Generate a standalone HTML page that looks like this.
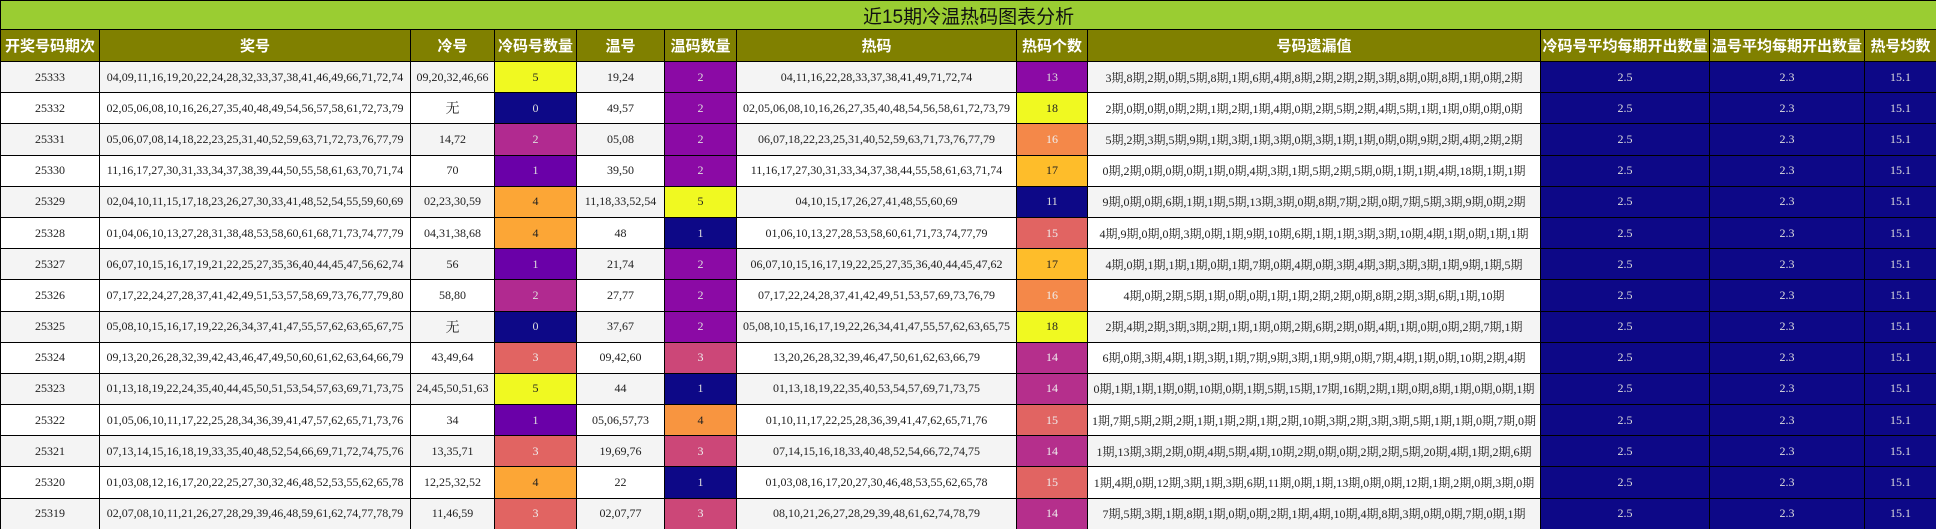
<!DOCTYPE html>
<html><head><meta charset="utf-8">
<style>
html,body{margin:0;padding:0;width:1936px;height:529px;overflow:hidden;background:#fff}
table{border-collapse:collapse;table-layout:fixed;width:1936px}
td,th{border:1.5px solid #000;text-align:center;padding:0;overflow:hidden;white-space:nowrap}
thead tr.t td{background:#9acd32;height:28px;font:19px "Liberation Sans","Noto Sans CJK SC",sans-serif;color:#111}
th{background:#808000;color:#fff;height:31px;font:bold 15px "Liberation Sans","Noto Sans CJK SC",sans-serif}
tbody td{height:30.2px;font:12px "Liberation Serif","Noto Serif CJK SC",serif;color:#222}
tbody tr:nth-child(odd) td{background:#f4f4f4}
tbody tr:nth-child(even) td{background:#fff}
tbody td.a{background:#0d0887!important;color:#ddd}
td.c0{background:#0d0887!important;color:#ddd}
td.c1{background:#6a00a8!important;color:#ddd}
td.c2{background:#b12a90!important;color:#ddd}
td.p2{background:#8b0aa5!important;color:#ddd}
td.c3{background:#e16462!important;color:#eee}
td.k3{background:#cc4778!important;color:#eee}
td.c4{background:#fca636!important;color:#222}
td.w4{background:#f89540!important;color:#222}
td.c5{background:#f0f921!important;color:#222}
td.h11{background:#0d0887!important;color:#ddd}
td.h13{background:#8b0aa5!important;color:#ddd}
td.h14{background:#b52f8c!important;color:#eee}
td.h15{background:#e16462!important;color:#eee}
td.h16{background:#f48849!important;color:#eee}
td.h17{background:#febd2a!important;color:#222}
td.h18{background:#f0f921!important;color:#222}
</style></head><body>
<table>
<colgroup><col style="width:99px"><col style="width:311px"><col style="width:84px"><col style="width:82px"><col style="width:88px"><col style="width:72px"><col style="width:280px"><col style="width:71px"><col style="width:453px"><col style="width:169px"><col style="width:155px"><col style="width:72px"></colgroup>
<thead>
<tr class="t"><td colspan="12">近15期冷温热码图表分析</td></tr>
<tr><th>开奖号码期次</th><th>奖号</th><th>冷号</th><th>冷码号数量</th><th>温号</th><th>温码数量</th><th>热码</th><th>热码个数</th><th>号码遗漏值</th><th>冷码号平均每期开出数量</th><th>温号平均每期开出数量</th><th>热号均数</th></tr>
</thead>
<tbody>
<tr><td>25333</td><td>04,09,11,16,19,20,22,24,28,32,33,37,38,41,46,49,66,71,72,74</td><td>09,20,32,46,66</td><td class="c5">5</td><td>19,24</td><td class="p2">2</td><td>04,11,16,22,28,33,37,38,41,49,71,72,74</td><td class="h13">13</td><td>3期,8期,2期,0期,5期,8期,1期,6期,4期,8期,2期,2期,2期,3期,8期,0期,8期,1期,0期,2期</td><td class="a">2.5</td><td class="a">2.3</td><td class="a">15.1</td></tr>
<tr><td>25332</td><td>02,05,06,08,10,16,26,27,35,40,48,49,54,56,57,58,61,72,73,79</td><td style="font-size:14px">无</td><td class="c0">0</td><td>49,57</td><td class="p2">2</td><td>02,05,06,08,10,16,26,27,35,40,48,54,56,58,61,72,73,79</td><td class="h18">18</td><td>2期,0期,0期,0期,2期,1期,2期,1期,4期,0期,2期,5期,2期,4期,5期,1期,1期,0期,0期,0期</td><td class="a">2.5</td><td class="a">2.3</td><td class="a">15.1</td></tr>
<tr><td>25331</td><td>05,06,07,08,14,18,22,23,25,31,40,52,59,63,71,72,73,76,77,79</td><td>14,72</td><td class="c2">2</td><td>05,08</td><td class="p2">2</td><td>06,07,18,22,23,25,31,40,52,59,63,71,73,76,77,79</td><td class="h16">16</td><td>5期,2期,3期,5期,9期,1期,3期,1期,3期,0期,3期,1期,1期,0期,0期,9期,2期,4期,2期,2期</td><td class="a">2.5</td><td class="a">2.3</td><td class="a">15.1</td></tr>
<tr><td>25330</td><td>11,16,17,27,30,31,33,34,37,38,39,44,50,55,58,61,63,70,71,74</td><td>70</td><td class="c1">1</td><td>39,50</td><td class="p2">2</td><td>11,16,17,27,30,31,33,34,37,38,44,55,58,61,63,71,74</td><td class="h17">17</td><td>0期,2期,0期,0期,0期,1期,0期,4期,3期,1期,5期,2期,5期,0期,1期,1期,4期,18期,1期,1期</td><td class="a">2.5</td><td class="a">2.3</td><td class="a">15.1</td></tr>
<tr><td>25329</td><td>02,04,10,11,15,17,18,23,26,27,30,33,41,48,52,54,55,59,60,69</td><td>02,23,30,59</td><td class="c4">4</td><td>11,18,33,52,54</td><td class="c5">5</td><td>04,10,15,17,26,27,41,48,55,60,69</td><td class="h11">11</td><td>9期,0期,0期,6期,1期,1期,5期,13期,3期,0期,8期,7期,2期,0期,7期,5期,3期,9期,0期,2期</td><td class="a">2.5</td><td class="a">2.3</td><td class="a">15.1</td></tr>
<tr><td>25328</td><td>01,04,06,10,13,27,28,31,38,48,53,58,60,61,68,71,73,74,77,79</td><td>04,31,38,68</td><td class="c4">4</td><td>48</td><td class="c0">1</td><td>01,06,10,13,27,28,53,58,60,61,71,73,74,77,79</td><td class="h15">15</td><td>4期,9期,0期,0期,3期,0期,1期,9期,10期,6期,1期,1期,3期,3期,10期,4期,1期,0期,1期,1期</td><td class="a">2.5</td><td class="a">2.3</td><td class="a">15.1</td></tr>
<tr><td>25327</td><td>06,07,10,15,16,17,19,21,22,25,27,35,36,40,44,45,47,56,62,74</td><td>56</td><td class="c1">1</td><td>21,74</td><td class="p2">2</td><td>06,07,10,15,16,17,19,22,25,27,35,36,40,44,45,47,62</td><td class="h17">17</td><td>4期,0期,1期,1期,1期,0期,1期,7期,0期,4期,0期,3期,4期,3期,3期,3期,1期,9期,1期,5期</td><td class="a">2.5</td><td class="a">2.3</td><td class="a">15.1</td></tr>
<tr><td>25326</td><td>07,17,22,24,27,28,37,41,42,49,51,53,57,58,69,73,76,77,79,80</td><td>58,80</td><td class="c2">2</td><td>27,77</td><td class="p2">2</td><td>07,17,22,24,28,37,41,42,49,51,53,57,69,73,76,79</td><td class="h16">16</td><td>4期,0期,2期,5期,1期,0期,0期,1期,1期,2期,2期,0期,8期,2期,3期,6期,1期,10期</td><td class="a">2.5</td><td class="a">2.3</td><td class="a">15.1</td></tr>
<tr><td>25325</td><td>05,08,10,15,16,17,19,22,26,34,37,41,47,55,57,62,63,65,67,75</td><td style="font-size:14px">无</td><td class="c0">0</td><td>37,67</td><td class="p2">2</td><td>05,08,10,15,16,17,19,22,26,34,41,47,55,57,62,63,65,75</td><td class="h18">18</td><td>2期,4期,2期,3期,3期,2期,1期,1期,0期,2期,6期,2期,0期,4期,1期,0期,0期,2期,7期,1期</td><td class="a">2.5</td><td class="a">2.3</td><td class="a">15.1</td></tr>
<tr><td>25324</td><td>09,13,20,26,28,32,39,42,43,46,47,49,50,60,61,62,63,64,66,79</td><td>43,49,64</td><td class="c3">3</td><td>09,42,60</td><td class="k3">3</td><td>13,20,26,28,32,39,46,47,50,61,62,63,66,79</td><td class="h14">14</td><td>6期,0期,3期,4期,1期,3期,1期,7期,9期,3期,1期,9期,0期,7期,4期,1期,0期,10期,2期,4期</td><td class="a">2.5</td><td class="a">2.3</td><td class="a">15.1</td></tr>
<tr><td>25323</td><td>01,13,18,19,22,24,35,40,44,45,50,51,53,54,57,63,69,71,73,75</td><td>24,45,50,51,63</td><td class="c5">5</td><td>44</td><td class="c0">1</td><td>01,13,18,19,22,35,40,53,54,57,69,71,73,75</td><td class="h14">14</td><td>0期,1期,1期,1期,0期,10期,0期,1期,5期,15期,17期,16期,2期,1期,0期,8期,1期,0期,0期,1期</td><td class="a">2.5</td><td class="a">2.3</td><td class="a">15.1</td></tr>
<tr><td>25322</td><td>01,05,06,10,11,17,22,25,28,34,36,39,41,47,57,62,65,71,73,76</td><td>34</td><td class="c1">1</td><td>05,06,57,73</td><td class="w4">4</td><td>01,10,11,17,22,25,28,36,39,41,47,62,65,71,76</td><td class="h15">15</td><td>1期,7期,5期,2期,2期,1期,1期,2期,1期,2期,10期,3期,2期,3期,3期,5期,1期,1期,0期,7期,0期</td><td class="a">2.5</td><td class="a">2.3</td><td class="a">15.1</td></tr>
<tr><td>25321</td><td>07,13,14,15,16,18,19,33,35,40,48,52,54,66,69,71,72,74,75,76</td><td>13,35,71</td><td class="c3">3</td><td>19,69,76</td><td class="k3">3</td><td>07,14,15,16,18,33,40,48,52,54,66,72,74,75</td><td class="h14">14</td><td>1期,13期,3期,2期,0期,4期,5期,4期,10期,2期,0期,0期,2期,2期,5期,20期,4期,1期,2期,6期</td><td class="a">2.5</td><td class="a">2.3</td><td class="a">15.1</td></tr>
<tr><td>25320</td><td>01,03,08,12,16,17,20,22,25,27,30,32,46,48,52,53,55,62,65,78</td><td>12,25,32,52</td><td class="c4">4</td><td>22</td><td class="c0">1</td><td>01,03,08,16,17,20,27,30,46,48,53,55,62,65,78</td><td class="h15">15</td><td>1期,4期,0期,12期,3期,1期,3期,6期,11期,0期,1期,13期,0期,0期,12期,1期,2期,0期,3期,0期</td><td class="a">2.5</td><td class="a">2.3</td><td class="a">15.1</td></tr>
<tr><td>25319</td><td>02,07,08,10,11,21,26,27,28,29,39,46,48,59,61,62,74,77,78,79</td><td>11,46,59</td><td class="c3">3</td><td>02,07,77</td><td class="k3">3</td><td>08,10,21,26,27,28,29,39,48,61,62,74,78,79</td><td class="h14">14</td><td>7期,5期,3期,1期,8期,1期,0期,0期,2期,1期,4期,10期,4期,8期,3期,0期,0期,7期,0期,1期</td><td class="a">2.5</td><td class="a">2.3</td><td class="a">15.1</td></tr>
</tbody>
</table>
</body></html>
